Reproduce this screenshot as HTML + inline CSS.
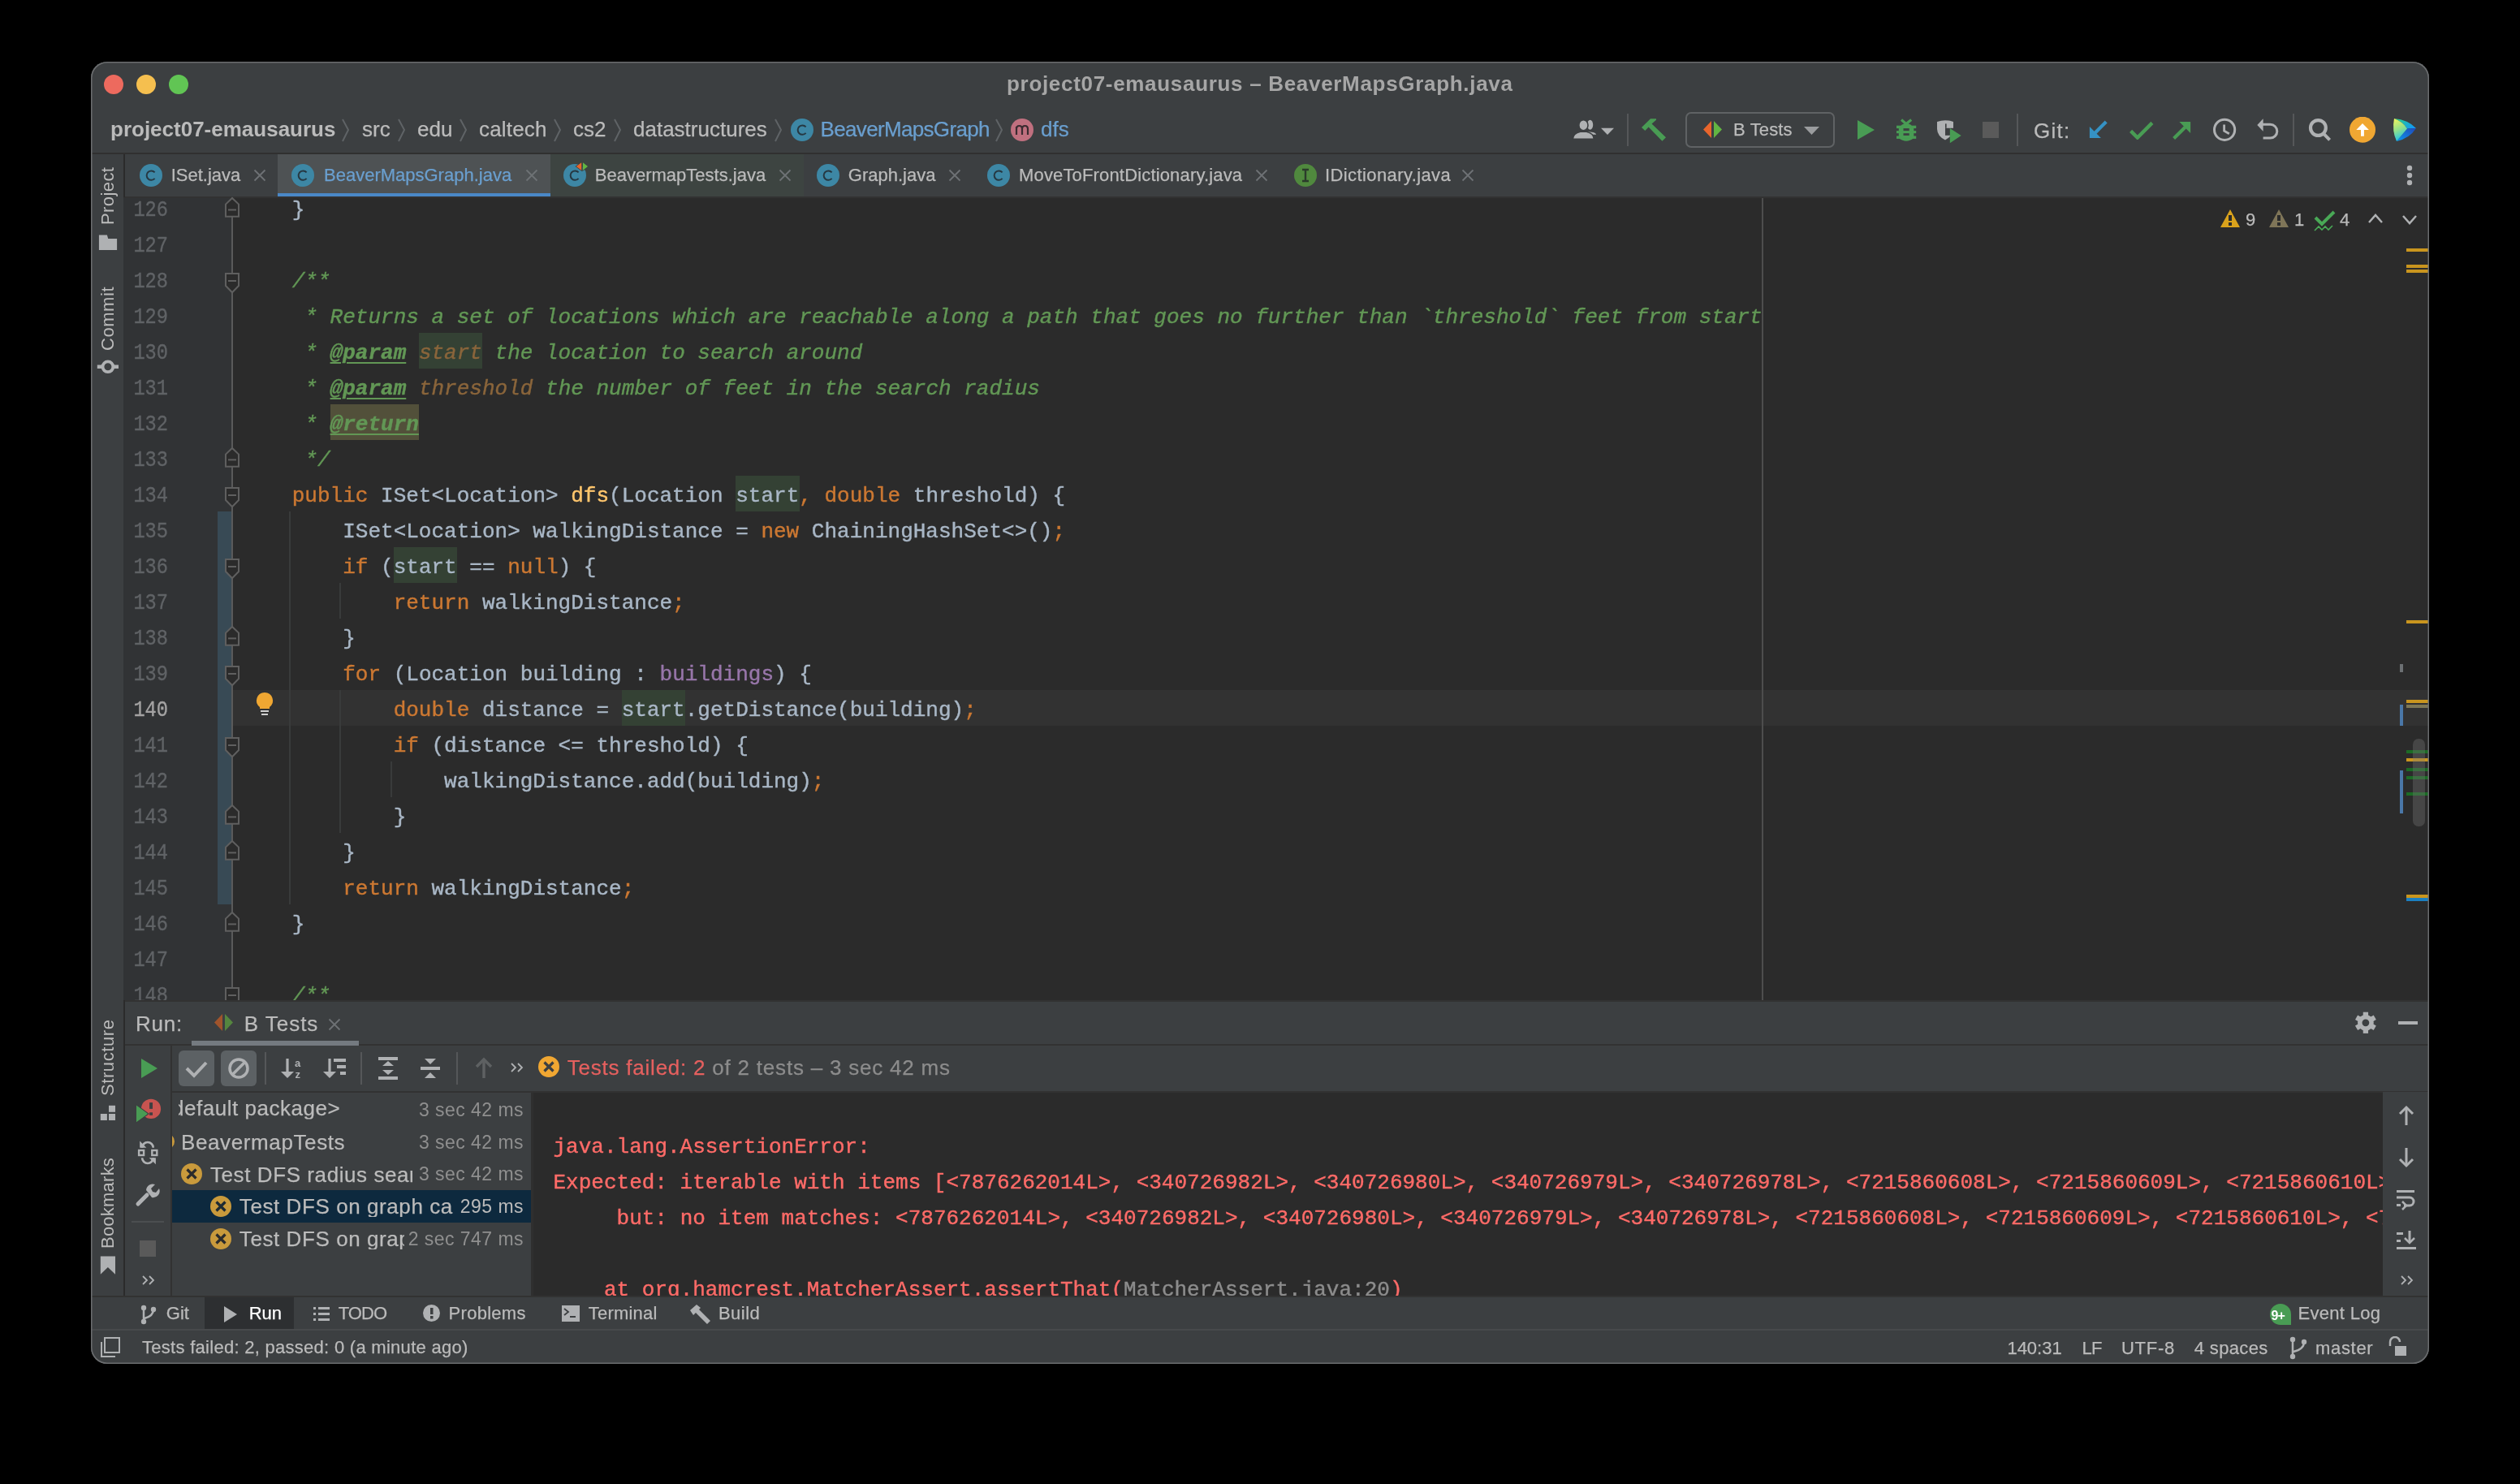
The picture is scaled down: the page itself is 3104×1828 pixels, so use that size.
<!DOCTYPE html>
<html><head><meta charset="utf-8"><style>
html,body{margin:0;padding:0;background:#000;width:3104px;height:1828px;overflow:hidden}
#win{will-change:transform;position:absolute;left:112px;top:76px;width:2880px;height:1604px;border-radius:20px;overflow:hidden;background:#3c3f41}
#frame{position:absolute;left:112px;top:76px;width:2880px;height:1604px;border-radius:20px;box-shadow:inset 0 0 0 1.5px #6b6d6f;pointer-events:none}
</style></head><body>
<div id="win"><div style="position:absolute;left:0px;top:0px;width:2880px;height:113px;background:#3c3f41;"></div><svg style="position:absolute;left:0px;top:0px;" width="140" height="60" viewBox="0 0 140 60"><circle cx="28" cy="28" r="12" fill="#ed6a5e"/><circle cx="68" cy="28" r="12" fill="#f5bf4f"/><circle cx="108" cy="28" r="12" fill="#61c554"/></svg><div style="position:absolute;left:1128.00px;top:13.99px;font-family:'Liberation Sans', sans-serif;font-size:26px;line-height:26px;color:#a6a6a6;white-space:pre;font-weight:700;letter-spacing:0.69px;">project07-emausaurus – BeaverMapsGraph.java</div><div style="position:absolute;left:24.00px;top:69.99px;font-family:'Liberation Sans', sans-serif;font-size:26px;line-height:26px;color:#bbbbbb;white-space:pre;font-weight:700;">project07-emausaurus</div><svg style="position:absolute;left:308px;top:70px;" width="12" height="30" viewBox="0 0 12 30"><polyline points="2,1 9,14 2,28" fill="none" stroke="#5f6366" stroke-width="2"/></svg><svg style="position:absolute;left:377px;top:70px;" width="12" height="30" viewBox="0 0 12 30"><polyline points="2,1 9,14 2,28" fill="none" stroke="#5f6366" stroke-width="2"/></svg><svg style="position:absolute;left:453px;top:70px;" width="12" height="30" viewBox="0 0 12 30"><polyline points="2,1 9,14 2,28" fill="none" stroke="#5f6366" stroke-width="2"/></svg><svg style="position:absolute;left:569px;top:70px;" width="12" height="30" viewBox="0 0 12 30"><polyline points="2,1 9,14 2,28" fill="none" stroke="#5f6366" stroke-width="2"/></svg><svg style="position:absolute;left:643px;top:70px;" width="12" height="30" viewBox="0 0 12 30"><polyline points="2,1 9,14 2,28" fill="none" stroke="#5f6366" stroke-width="2"/></svg><svg style="position:absolute;left:841px;top:70px;" width="12" height="30" viewBox="0 0 12 30"><polyline points="2,1 9,14 2,28" fill="none" stroke="#5f6366" stroke-width="2"/></svg><svg style="position:absolute;left:1113px;top:70px;" width="12" height="30" viewBox="0 0 12 30"><polyline points="2,1 9,14 2,28" fill="none" stroke="#5f6366" stroke-width="2"/></svg><div style="position:absolute;left:334.00px;top:69.99px;font-family:'Liberation Sans', sans-serif;font-size:26px;line-height:26px;color:#bbbbbb;white-space:pre;-webkit-text-stroke:0.25px currentColor;">src</div><div style="position:absolute;left:402.00px;top:69.99px;font-family:'Liberation Sans', sans-serif;font-size:26px;line-height:26px;color:#bbbbbb;white-space:pre;-webkit-text-stroke:0.25px currentColor;">edu</div><div style="position:absolute;left:478.00px;top:69.99px;font-family:'Liberation Sans', sans-serif;font-size:26px;line-height:26px;color:#bbbbbb;white-space:pre;letter-spacing:0.18px;-webkit-text-stroke:0.25px currentColor;">caltech</div><div style="position:absolute;left:594.00px;top:69.99px;font-family:'Liberation Sans', sans-serif;font-size:26px;line-height:26px;color:#bbbbbb;white-space:pre;-webkit-text-stroke:0.25px currentColor;">cs2</div><div style="position:absolute;left:668.00px;top:69.99px;font-family:'Liberation Sans', sans-serif;font-size:26px;line-height:26px;color:#bbbbbb;white-space:pre;-webkit-text-stroke:0.25px currentColor;">datastructures</div><svg style="position:absolute;left:862px;top:70px;" width="28" height="28" viewBox="0 0 28 28"><circle cx="14" cy="14" r="14" fill="#3d87a5"/><path d="M18.6 10.3 A5.7 5.7 0 1 0 18.6 17.9" fill="none" stroke="#263842" stroke-width="2"/></svg><div style="position:absolute;left:898.60px;top:69.99px;font-family:'Liberation Sans', sans-serif;font-size:26px;line-height:26px;color:#6a9fcf;white-space:pre;letter-spacing:-0.67px;-webkit-text-stroke:0.25px currentColor;">BeaverMapsGraph</div><svg style="position:absolute;left:1133px;top:70px;" width="28" height="28" viewBox="0 0 28 28"><circle cx="14" cy="14" r="14" fill="#c0707f"/><path d="M7 20 V10 M7 13 Q7 9 10.5 9 Q14 9 14 13 V20 M14 13 Q14 9 17.5 9 Q21 9 21 13 V20" fill="none" stroke="#3b2b30" stroke-width="2.2"/></svg><div style="position:absolute;left:1170.00px;top:69.99px;font-family:'Liberation Sans', sans-serif;font-size:26px;line-height:26px;color:#6a9fcf;white-space:pre;-webkit-text-stroke:0.25px currentColor;">dfs</div><svg style="position:absolute;left:1822px;top:68px;" width="60" height="32" viewBox="0 0 60 32"><ellipse cx="24.6" cy="9.8" rx="3.6" ry="6" fill="#afb1b3"/><path d="M20 18 Q31 18.5 32 21.3 L32 21.8 L24 21.8 Z" fill="#afb1b3"/><g stroke="#3c3f41" stroke-width="1.6"><ellipse cx="16.4" cy="10.2" rx="5.6" ry="6.6" fill="#afb1b3"/><path d="M3.2 27.4 Q3.6 20.2 12.6 18.2 L20.2 18.2 Q29.2 20.2 29.4 27.4 Z" fill="#afb1b3"/></g><path d="M38 13.8 L54 13.8 L46 22 Z" fill="#afb1b3"/></svg><div style="position:absolute;left:1892px;top:64px;width:2px;height:40px;background:#555759;"></div><svg style="position:absolute;left:1908px;top:68px;" width="36" height="32" viewBox="0 0 36 32"><path d="M2 13 L13 2.2 L20 2.2 L20 3.8 L14.5 8.6 L32 25.2 L27.4 29.8 L10.6 12.6 L6.3 17 Z" fill="#499c54"/></svg><div style="position:absolute;left:1964px;top:62px;width:184px;height:44px;border:2px solid #5f6264;border-radius:7px;box-sizing:border-box"></div><svg style="position:absolute;left:1984px;top:72px;" width="30" height="24" viewBox="0 0 30 24"><path d="M12 1 L12 22 L2 11.5 Z" fill="#e8652c"/><path d="M15 1 L15 22 L25 11.5 Z" fill="#62b543"/></svg><div style="position:absolute;left:2023.00px;top:73.38px;font-family:'Liberation Sans', sans-serif;font-size:22px;line-height:22px;color:#bbbbbb;white-space:pre;letter-spacing:0.14px;-webkit-text-stroke:0.25px currentColor;">B Tests</div><svg style="position:absolute;left:2108px;top:78px;" width="24" height="14" viewBox="0 0 24 14"><path d="M2 2 L21 2 L11.5 12 Z" fill="#9a9c9e"/></svg><svg style="position:absolute;left:2174px;top:70px;" width="26" height="28" viewBox="0 0 26 28"><path d="M2 2 L23 14 L2 26 Z" fill="#499c54"/></svg><svg style="position:absolute;left:2222px;top:68px;" width="30" height="34" viewBox="0 0 30 34"><path d="M8 3.5 L14 8.6 L20.2 3.5" fill="none" stroke="#499c54" stroke-width="3.2"/><path d="M9 9.5 Q14 5.8 19.2 9.5 L23.3 13 V26 Q14 33.5 4.8 26 V13 Z" fill="#499c54"/><rect x="2" y="10.7" width="24.2" height="3.4" fill="#499c54"/><rect x="2" y="17.1" width="24.2" height="3.1" fill="#499c54"/><rect x="2" y="23.5" width="24.2" height="3.4" fill="#499c54"/><rect x="10.5" y="14.1" width="7.2" height="3" fill="#3c3f41"/><rect x="10.5" y="20.2" width="7.2" height="2.7" fill="#3c3f41"/></svg><svg style="position:absolute;left:2271px;top:68px;" width="36" height="34" viewBox="0 0 36 34"><path d="M3 6 Q13 2.5 23 6 V14 Q22 24 13 28.4 Q3.5 24 3 15 Z" fill="#afb1b3"/><rect x="13" y="13.8" width="11" height="9" fill="#3c3f41"/><rect x="13" y="8.4" width="1.6" height="5.4" fill="#3c3f41"/><path d="M18.8 14 L32.7 23.1 L18.8 32.2 Z" fill="#499c54"/></svg><div style="position:absolute;left:2330px;top:74px;width:20px;height:20px;background:#5a5a5a;"></div><div style="position:absolute;left:2372px;top:64px;width:2px;height:40px;background:#555759;"></div><div style="position:absolute;left:2393.00px;top:71.99px;font-family:'Liberation Sans', sans-serif;font-size:26px;line-height:26px;color:#bbbbbb;white-space:pre;letter-spacing:1.26px;-webkit-text-stroke:0.25px currentColor;">Git:</div><svg style="position:absolute;left:2460px;top:70px;" width="26" height="26" viewBox="0 0 26 26"><path d="M22.2 4 L7.5 18.7" stroke="#3592c4" stroke-width="4.2"/><path d="M1.9 10 L1.9 24.1 L15.9 24.1 Z" fill="#3592c4"/></svg><svg style="position:absolute;left:2510px;top:70px;" width="32" height="26" viewBox="0 0 32 26"><path d="M2.6 15.4 L10.8 23.6 L28.9 5.4" fill="none" stroke="#499c54" stroke-width="4.4"/></svg><svg style="position:absolute;left:2562px;top:70px;" width="26" height="28" viewBox="0 0 26 28"><path d="M3.6 24.6 L17.5 10.7" stroke="#499c54" stroke-width="4.2"/><path d="M10.4 4 L24.1 4 L24.1 18 Z" fill="#499c54"/></svg><svg style="position:absolute;left:2612px;top:68px;" width="32" height="32" viewBox="0 0 32 32"><circle cx="16.1" cy="15.8" r="12.6" fill="none" stroke="#afb1b3" stroke-width="3"/><path d="M15.6 9.4 V17.2 L21.8 20.8" fill="none" stroke="#afb1b3" stroke-width="2.8"/></svg><svg style="position:absolute;left:2666px;top:68px;" width="32" height="32" viewBox="0 0 32 32"><path d="M9 9.3 H18.4 A8.4 8.4 0 0 1 18.4 26.1 H9.6" fill="none" stroke="#afb1b3" stroke-width="3"/><path d="M2.3 9.9 L9.6 2.2 L9.6 17.7 Z" fill="#afb1b3"/></svg><div style="position:absolute;left:2712px;top:64px;width:2px;height:40px;background:#555759;"></div><svg style="position:absolute;left:2730px;top:68px;" width="32" height="32" viewBox="0 0 32 32"><circle cx="13.4" cy="13.5" r="9.4" fill="none" stroke="#afb1b3" stroke-width="4.2"/><path d="M20.3 20.8 L27.6 28.3" stroke="#afb1b3" stroke-width="4"/></svg><svg style="position:absolute;left:2782px;top:68px;" width="32" height="32" viewBox="0 0 32 32"><circle cx="16" cy="15.7" r="16" fill="#f0a732"/><path d="M16 8 L23.9 16 H17.9 V23.8 H14 V16 H8.3 Z" fill="#ffffff"/></svg><svg style="position:absolute;left:2834px;top:68px;" width="32" height="32" viewBox="0 0 32 32"><defs><linearGradient id="lgL" x1="0" y1="0" x2="0.3" y2="1"><stop offset="0" stop-color="#f6f65a"/><stop offset="0.55" stop-color="#8fe08c"/><stop offset="1" stop-color="#1ec5ec"/></linearGradient><linearGradient id="lgT" x1="0" y1="0" x2="1" y2="0.6"><stop offset="0" stop-color="#2ad87f"/><stop offset="1" stop-color="#139bf0"/></linearGradient><linearGradient id="lgB" x1="1" y1="0" x2="0" y2="1"><stop offset="0" stop-color="#2347b8"/><stop offset="1" stop-color="#0a9af0"/></linearGradient></defs><path d="M3 2 Q20 3.5 30 14 L19 14.4 Q14 6 3 2 Z" fill="url(#lgT)"/><path d="M19 14.4 L30 14 Q22 26.5 6 30 Z" fill="url(#lgB)"/><path d="M3 2 Q0 17 6 30 L19 14.4 Q14 6 3 2 Z" fill="url(#lgL)"/></svg><div style="position:absolute;left:0px;top:112px;width:2880px;height:2px;background:#303030;"></div><div style="position:absolute;left:0px;top:114px;width:40px;height:1406px;background:#3c3f41;"></div><div style="position:absolute;left:40px;top:114px;width:2px;height:53px;background:#2b2b2b;"></div><div style="position:absolute;left:40px;top:1156px;width:2px;height:364px;background:#2b2b2b;"></div><div style="position:absolute;left:9.58px;top:201.00px;width:0;height:0"><div style="position:absolute;left:0;top:0;transform:rotate(-90deg);transform-origin:0 0;font-family:'Liberation Sans', sans-serif;font-size:22px;line-height:22px;color:#bbbbbb;white-space:pre;letter-spacing:0.41px">Project</div></div><svg style="position:absolute;left:8px;top:212px;" width="26" height="22" viewBox="0 0 26 22"><path d="M1.9 1.6 H11.9 L13.2 6.1 H24.1 V19.9 H1.9 Z" fill="#afb1b3"/></svg><div style="position:absolute;left:9.58px;top:355.80px;width:0;height:0"><div style="position:absolute;left:0;top:0;transform:rotate(-90deg);transform-origin:0 0;font-family:'Liberation Sans', sans-serif;font-size:22px;line-height:22px;color:#bbbbbb;white-space:pre;letter-spacing:0.55px">Commit</div></div><svg style="position:absolute;left:6px;top:367px;" width="30" height="18" viewBox="0 0 30 18"><circle cx="14.9" cy="8.8" r="6.4" fill="none" stroke="#afb1b3" stroke-width="3.8"/><rect x="1.8" y="6.5" width="6.8" height="4.5" fill="#afb1b3"/><rect x="21.2" y="6.5" width="6.8" height="4.5" fill="#afb1b3"/></svg><div style="position:absolute;left:10.38px;top:1273.70px;width:0;height:0"><div style="position:absolute;left:0;top:0;transform:rotate(-90deg);transform-origin:0 0;font-family:'Liberation Sans', sans-serif;font-size:22px;line-height:22px;color:#bbbbbb;white-space:pre;letter-spacing:0.58px">Structure</div></div><svg style="position:absolute;left:10px;top:1284px;" width="22" height="22" viewBox="0 0 22 22"><rect x="12" y="1.8" width="8" height="8" fill="#afb1b3"/><rect x="1.8" y="12" width="8.1" height="8" fill="#afb1b3"/><rect x="12" y="12" width="8" height="8" fill="#afb1b3"/></svg><div style="position:absolute;left:10.38px;top:1461.90px;width:0;height:0"><div style="position:absolute;left:0;top:0;transform:rotate(-90deg);transform-origin:0 0;font-family:'Liberation Sans', sans-serif;font-size:22px;line-height:22px;color:#bbbbbb;white-space:pre;letter-spacing:0.23px">Bookmarks</div></div><svg style="position:absolute;left:10px;top:1470px;" width="22" height="26" viewBox="0 0 22 26"><path d="M1.8 1.6 H20 V23.7 L10.9 14.9 L1.8 23.7 Z" fill="#afb1b3"/></svg><div style="position:absolute;left:42px;top:114px;width:2838px;height:52px;background:#3c3f41;"></div><div style="position:absolute;left:230px;top:114px;width:336px;height:52px;background:#4e5254;"></div><div style="position:absolute;left:230px;top:162px;width:336px;height:4px;background:#4a88c7;"></div><div style="position:absolute;left:566px;top:114px;width:312px;height:52px;background:#3d4441;"></div><div style="position:absolute;left:42px;top:166px;width:2838px;height:1px;background:#323232;"></div><svg style="position:absolute;left:60px;top:126px;" width="28" height="28" viewBox="0 0 28 28"><circle cx="14" cy="14" r="14" fill="#3d87a5"/><path d="M18.6 10.3 A5.7 5.7 0 1 0 18.6 17.9" fill="none" stroke="#263842" stroke-width="2"/></svg><div style="position:absolute;left:98.70px;top:129.38px;font-family:'Liberation Sans', sans-serif;font-size:22px;line-height:22px;color:#bbbbbb;white-space:pre;-webkit-text-stroke:0.25px currentColor;">ISet.java</div><svg style="position:absolute;left:200px;top:132px;" width="16" height="16" viewBox="0 0 16 16"><path d="M1.5 1.5 L14.5 14.5 M14.5 1.5 L1.5 14.5" stroke="#6e7275" stroke-width="1.8"/></svg><svg style="position:absolute;left:247px;top:126px;" width="28" height="28" viewBox="0 0 28 28"><circle cx="14" cy="14" r="14" fill="#3d87a5"/><path d="M18.6 10.3 A5.7 5.7 0 1 0 18.6 17.9" fill="none" stroke="#263842" stroke-width="2"/></svg><div style="position:absolute;left:287.00px;top:129.38px;font-family:'Liberation Sans', sans-serif;font-size:22px;line-height:22px;color:#6a9fcf;white-space:pre;-webkit-text-stroke:0.25px currentColor;">BeaverMapsGraph.java</div><svg style="position:absolute;left:534.5px;top:132px;" width="16" height="16" viewBox="0 0 16 16"><path d="M1.5 1.5 L14.5 14.5 M14.5 1.5 L1.5 14.5" stroke="#6e7275" stroke-width="1.8"/></svg><svg style="position:absolute;left:582px;top:126px;" width="28" height="28" viewBox="0 0 28 28"><circle cx="14" cy="14" r="14" fill="#3d87a5"/><path d="M18.6 10.3 A5.7 5.7 0 1 0 18.6 17.9" fill="none" stroke="#263842" stroke-width="2"/></svg><div style="position:absolute;left:620.80px;top:129.38px;font-family:'Liberation Sans', sans-serif;font-size:22px;line-height:22px;color:#bbbbbb;white-space:pre;-webkit-text-stroke:0.25px currentColor;">BeavermapTests.java</div><svg style="position:absolute;left:846.5px;top:132px;" width="16" height="16" viewBox="0 0 16 16"><path d="M1.5 1.5 L14.5 14.5 M14.5 1.5 L1.5 14.5" stroke="#6e7275" stroke-width="1.8"/></svg><svg style="position:absolute;left:894px;top:126px;" width="28" height="28" viewBox="0 0 28 28"><circle cx="14" cy="14" r="14" fill="#3d87a5"/><path d="M18.6 10.3 A5.7 5.7 0 1 0 18.6 17.9" fill="none" stroke="#263842" stroke-width="2"/></svg><div style="position:absolute;left:932.80px;top:129.38px;font-family:'Liberation Sans', sans-serif;font-size:22px;line-height:22px;color:#bbbbbb;white-space:pre;-webkit-text-stroke:0.25px currentColor;">Graph.java</div><svg style="position:absolute;left:1055.8px;top:132px;" width="16" height="16" viewBox="0 0 16 16"><path d="M1.5 1.5 L14.5 14.5 M14.5 1.5 L1.5 14.5" stroke="#6e7275" stroke-width="1.8"/></svg><svg style="position:absolute;left:1103.5px;top:126px;" width="28" height="28" viewBox="0 0 28 28"><circle cx="14" cy="14" r="14" fill="#3d87a5"/><path d="M18.6 10.3 A5.7 5.7 0 1 0 18.6 17.9" fill="none" stroke="#263842" stroke-width="2"/></svg><div style="position:absolute;left:1143.00px;top:129.38px;font-family:'Liberation Sans', sans-serif;font-size:22px;line-height:22px;color:#bbbbbb;white-space:pre;letter-spacing:0.16px;-webkit-text-stroke:0.25px currentColor;">MoveToFrontDictionary.java</div><svg style="position:absolute;left:1433.8px;top:132px;" width="16" height="16" viewBox="0 0 16 16"><path d="M1.5 1.5 L14.5 14.5 M14.5 1.5 L1.5 14.5" stroke="#6e7275" stroke-width="1.8"/></svg><svg style="position:absolute;left:1482px;top:126px;" width="28" height="28" viewBox="0 0 28 28"><circle cx="14" cy="14" r="14" fill="#50893e"/><path d="M10 7 H18 M14 7 V21 M10 21 H18" fill="none" stroke="#2b3b2b" stroke-width="2.4"/></svg><div style="position:absolute;left:1520.00px;top:129.38px;font-family:'Liberation Sans', sans-serif;font-size:22px;line-height:22px;color:#bbbbbb;white-space:pre;letter-spacing:0.4px;-webkit-text-stroke:0.25px currentColor;">IDictionary.java</div><svg style="position:absolute;left:1688.4px;top:132px;" width="16" height="16" viewBox="0 0 16 16"><path d="M1.5 1.5 L14.5 14.5 M14.5 1.5 L1.5 14.5" stroke="#6e7275" stroke-width="1.8"/></svg><svg style="position:absolute;left:595px;top:122px;" width="20" height="14" viewBox="0 0 20 14"><path d="M9.2 2.3 V11.8 L2.8 7 Z" fill="#e8652c" stroke="#3d4441" stroke-width="1.5" paint-order="stroke"/><path d="M11 2.3 V11.8 L17 7 Z" fill="#62b543" stroke="#3d4441" stroke-width="1.5" paint-order="stroke"/></svg><svg style="position:absolute;left:2850px;top:124px;" width="12" height="32" viewBox="0 0 12 32"><circle cx="6" cy="7" r="3.2" fill="#afb1b3"/><circle cx="6" cy="16" r="3.2" fill="#afb1b3"/><circle cx="6" cy="25" r="3.2" fill="#afb1b3"/></svg><div style="position:absolute;left:42px;top:167px;width:2838px;height:989px;background:#2b2b2b;"></div><div style="position:absolute;left:40px;top:167px;width:134px;height:989px;background:#313335;"></div><div style="position:absolute;left:174px;top:774px;width:2706px;height:44px;background:#323232;"></div><div style="position:absolute;left:2058px;top:167px;width:2px;height:989px;background:#4d4d4d;"></div><div style="position:absolute;left:40px;top:167px;width:2840px;height:1px;background:#323232;"></div><div style="position:absolute;left:185.30px;top:170.35px;font-family:'Liberation Mono', monospace;font-size:26.03px;line-height:26.03px;color:#a9b7c6;white-space:pre;-webkit-text-stroke:0.4px currentColor;"><span style="color:#a9b7c6">    }</span></div><div style="position:absolute;left:185.30px;top:258.35px;font-family:'Liberation Mono', monospace;font-size:26.03px;line-height:26.03px;color:#a9b7c6;white-space:pre;-webkit-text-stroke:0.4px currentColor;"><span style="color:#629755;font-style:italic">    /**</span></div><div style="position:absolute;left:185.30px;top:302.35px;font-family:'Liberation Mono', monospace;font-size:26.03px;line-height:26.03px;color:#a9b7c6;white-space:pre;-webkit-text-stroke:0.4px currentColor;"><span style="color:#629755;font-style:italic">     * Returns a set of locations which are reachable along a path that goes no further than `threshold` feet from start</span></div><div style="position:absolute;left:403.98px;top:334px;width:78.1px;height:44px;background:#344134;"></div><div style="position:absolute;left:185.30px;top:346.35px;font-family:'Liberation Mono', monospace;font-size:26.03px;line-height:26.03px;color:#a9b7c6;white-space:pre;-webkit-text-stroke:0.4px currentColor;"><span style="color:#629755;font-style:italic">     * </span><span style="color:#629755;font-style:italic;font-weight:700;text-decoration:underline;text-underline-offset:4px;text-decoration-thickness:2px">@param</span><span style="color:#629755;font-style:italic"> </span><span style="color:#8a653b;font-style:italic">start</span><span style="color:#629755;font-style:italic"> the location to search around</span></div><div style="position:absolute;left:185.30px;top:390.35px;font-family:'Liberation Mono', monospace;font-size:26.03px;line-height:26.03px;color:#a9b7c6;white-space:pre;-webkit-text-stroke:0.4px currentColor;"><span style="color:#629755;font-style:italic">     * </span><span style="color:#629755;font-style:italic;font-weight:700;text-decoration:underline;text-underline-offset:4px;text-decoration-thickness:2px">@param</span><span style="color:#629755;font-style:italic"> </span><span style="color:#8a653b;font-style:italic">threshold</span><span style="color:#629755;font-style:italic"> the number of feet in the search radius</span></div><div style="position:absolute;left:294.64px;top:422px;width:109.33999999999999px;height:44px;background:#52503a;"></div><div style="position:absolute;left:185.30px;top:434.35px;font-family:'Liberation Mono', monospace;font-size:26.03px;line-height:26.03px;color:#a9b7c6;white-space:pre;-webkit-text-stroke:0.4px currentColor;"><span style="color:#629755;font-style:italic">     * </span><span style="color:#629755;font-style:italic;font-weight:700;text-decoration:underline;text-underline-offset:4px;text-decoration-thickness:2px">@return</span></div><div style="position:absolute;left:185.30px;top:478.35px;font-family:'Liberation Mono', monospace;font-size:26.03px;line-height:26.03px;color:#a9b7c6;white-space:pre;-webkit-text-stroke:0.4px currentColor;"><span style="color:#629755;font-style:italic">     */</span></div><div style="position:absolute;left:794.48px;top:510px;width:78.1px;height:44px;background:#344134;"></div><div style="position:absolute;left:185.30px;top:522.35px;font-family:'Liberation Mono', monospace;font-size:26.03px;line-height:26.03px;color:#a9b7c6;white-space:pre;-webkit-text-stroke:0.4px currentColor;"><span style="color:#a9b7c6">    </span><span style="color:#cc7832">public</span><span style="color:#a9b7c6"> ISet&lt;Location&gt; </span><span style="color:#ffc66d">dfs</span><span style="color:#a9b7c6">(Location start</span><span style="color:#cc7832">,</span><span style="color:#a9b7c6"> </span><span style="color:#cc7832">double</span><span style="color:#a9b7c6"> threshold) {</span></div><div style="position:absolute;left:185.30px;top:566.35px;font-family:'Liberation Mono', monospace;font-size:26.03px;line-height:26.03px;color:#a9b7c6;white-space:pre;-webkit-text-stroke:0.4px currentColor;"><span style="color:#a9b7c6">        ISet&lt;Location&gt; walkingDistance = </span><span style="color:#cc7832">new</span><span style="color:#a9b7c6"> ChainingHashSet&lt;&gt;()</span><span style="color:#cc7832">;</span></div><div style="position:absolute;left:372.74px;top:598px;width:78.1px;height:44px;background:#344134;"></div><div style="position:absolute;left:185.30px;top:610.35px;font-family:'Liberation Mono', monospace;font-size:26.03px;line-height:26.03px;color:#a9b7c6;white-space:pre;-webkit-text-stroke:0.4px currentColor;"><span style="color:#a9b7c6">        </span><span style="color:#cc7832">if</span><span style="color:#a9b7c6"> (start == </span><span style="color:#cc7832">null</span><span style="color:#a9b7c6">) {</span></div><div style="position:absolute;left:185.30px;top:654.35px;font-family:'Liberation Mono', monospace;font-size:26.03px;line-height:26.03px;color:#a9b7c6;white-space:pre;-webkit-text-stroke:0.4px currentColor;"><span style="color:#a9b7c6">            </span><span style="color:#cc7832">return</span><span style="color:#a9b7c6"> walkingDistance</span><span style="color:#cc7832">;</span></div><div style="position:absolute;left:185.30px;top:698.35px;font-family:'Liberation Mono', monospace;font-size:26.03px;line-height:26.03px;color:#a9b7c6;white-space:pre;-webkit-text-stroke:0.4px currentColor;"><span style="color:#a9b7c6">        }</span></div><div style="position:absolute;left:185.30px;top:742.35px;font-family:'Liberation Mono', monospace;font-size:26.03px;line-height:26.03px;color:#a9b7c6;white-space:pre;-webkit-text-stroke:0.4px currentColor;"><span style="color:#a9b7c6">        </span><span style="color:#cc7832">for</span><span style="color:#a9b7c6"> (Location building : </span><span style="color:#9876aa">buildings</span><span style="color:#a9b7c6">) {</span></div><div style="position:absolute;left:653.9px;top:774px;width:78.1px;height:44px;background:#344134;"></div><div style="position:absolute;left:185.30px;top:786.35px;font-family:'Liberation Mono', monospace;font-size:26.03px;line-height:26.03px;color:#a9b7c6;white-space:pre;-webkit-text-stroke:0.4px currentColor;"><span style="color:#a9b7c6">            </span><span style="color:#cc7832">double</span><span style="color:#a9b7c6"> distance = start.getDistance(building)</span><span style="color:#cc7832">;</span></div><div style="position:absolute;left:185.30px;top:830.35px;font-family:'Liberation Mono', monospace;font-size:26.03px;line-height:26.03px;color:#a9b7c6;white-space:pre;-webkit-text-stroke:0.4px currentColor;"><span style="color:#a9b7c6">            </span><span style="color:#cc7832">if</span><span style="color:#a9b7c6"> (distance &lt;= threshold) {</span></div><div style="position:absolute;left:185.30px;top:874.35px;font-family:'Liberation Mono', monospace;font-size:26.03px;line-height:26.03px;color:#a9b7c6;white-space:pre;-webkit-text-stroke:0.4px currentColor;"><span style="color:#a9b7c6">                walkingDistance.add(building)</span><span style="color:#cc7832">;</span></div><div style="position:absolute;left:185.30px;top:918.35px;font-family:'Liberation Mono', monospace;font-size:26.03px;line-height:26.03px;color:#a9b7c6;white-space:pre;-webkit-text-stroke:0.4px currentColor;"><span style="color:#a9b7c6">            }</span></div><div style="position:absolute;left:185.30px;top:962.35px;font-family:'Liberation Mono', monospace;font-size:26.03px;line-height:26.03px;color:#a9b7c6;white-space:pre;-webkit-text-stroke:0.4px currentColor;"><span style="color:#a9b7c6">        }</span></div><div style="position:absolute;left:185.30px;top:1006.35px;font-family:'Liberation Mono', monospace;font-size:26.03px;line-height:26.03px;color:#a9b7c6;white-space:pre;-webkit-text-stroke:0.4px currentColor;"><span style="color:#a9b7c6">        </span><span style="color:#cc7832">return</span><span style="color:#a9b7c6"> walkingDistance</span><span style="color:#cc7832">;</span></div><div style="position:absolute;left:185.30px;top:1050.35px;font-family:'Liberation Mono', monospace;font-size:26.03px;line-height:26.03px;color:#a9b7c6;white-space:pre;-webkit-text-stroke:0.4px currentColor;"><span style="color:#a9b7c6">    }</span></div><div style="position:absolute;left:185.30px;top:1138.35px;font-family:'Liberation Mono', monospace;font-size:26.03px;line-height:26.03px;color:#a9b7c6;white-space:pre;-webkit-text-stroke:0.4px currentColor;"><span style="color:#629755;font-style:italic">    /**</span></div><div style="position:absolute;left:35px;top:169.22px;width:60px;text-align:right;font-family:'Liberation Mono', monospace;font-size:27.5px;line-height:27.5px;transform:scaleX(0.86);transform-origin:100% 50%;-webkit-text-stroke:0.35px currentColor;color:#606366">126</div><div style="position:absolute;left:35px;top:213.22px;width:60px;text-align:right;font-family:'Liberation Mono', monospace;font-size:27.5px;line-height:27.5px;transform:scaleX(0.86);transform-origin:100% 50%;-webkit-text-stroke:0.35px currentColor;color:#606366">127</div><div style="position:absolute;left:35px;top:257.22px;width:60px;text-align:right;font-family:'Liberation Mono', monospace;font-size:27.5px;line-height:27.5px;transform:scaleX(0.86);transform-origin:100% 50%;-webkit-text-stroke:0.35px currentColor;color:#606366">128</div><div style="position:absolute;left:35px;top:301.22px;width:60px;text-align:right;font-family:'Liberation Mono', monospace;font-size:27.5px;line-height:27.5px;transform:scaleX(0.86);transform-origin:100% 50%;-webkit-text-stroke:0.35px currentColor;color:#606366">129</div><div style="position:absolute;left:35px;top:345.22px;width:60px;text-align:right;font-family:'Liberation Mono', monospace;font-size:27.5px;line-height:27.5px;transform:scaleX(0.86);transform-origin:100% 50%;-webkit-text-stroke:0.35px currentColor;color:#606366">130</div><div style="position:absolute;left:35px;top:389.22px;width:60px;text-align:right;font-family:'Liberation Mono', monospace;font-size:27.5px;line-height:27.5px;transform:scaleX(0.86);transform-origin:100% 50%;-webkit-text-stroke:0.35px currentColor;color:#606366">131</div><div style="position:absolute;left:35px;top:433.22px;width:60px;text-align:right;font-family:'Liberation Mono', monospace;font-size:27.5px;line-height:27.5px;transform:scaleX(0.86);transform-origin:100% 50%;-webkit-text-stroke:0.35px currentColor;color:#606366">132</div><div style="position:absolute;left:35px;top:477.22px;width:60px;text-align:right;font-family:'Liberation Mono', monospace;font-size:27.5px;line-height:27.5px;transform:scaleX(0.86);transform-origin:100% 50%;-webkit-text-stroke:0.35px currentColor;color:#606366">133</div><div style="position:absolute;left:35px;top:521.22px;width:60px;text-align:right;font-family:'Liberation Mono', monospace;font-size:27.5px;line-height:27.5px;transform:scaleX(0.86);transform-origin:100% 50%;-webkit-text-stroke:0.35px currentColor;color:#606366">134</div><div style="position:absolute;left:35px;top:565.22px;width:60px;text-align:right;font-family:'Liberation Mono', monospace;font-size:27.5px;line-height:27.5px;transform:scaleX(0.86);transform-origin:100% 50%;-webkit-text-stroke:0.35px currentColor;color:#606366">135</div><div style="position:absolute;left:35px;top:609.22px;width:60px;text-align:right;font-family:'Liberation Mono', monospace;font-size:27.5px;line-height:27.5px;transform:scaleX(0.86);transform-origin:100% 50%;-webkit-text-stroke:0.35px currentColor;color:#606366">136</div><div style="position:absolute;left:35px;top:653.22px;width:60px;text-align:right;font-family:'Liberation Mono', monospace;font-size:27.5px;line-height:27.5px;transform:scaleX(0.86);transform-origin:100% 50%;-webkit-text-stroke:0.35px currentColor;color:#606366">137</div><div style="position:absolute;left:35px;top:697.22px;width:60px;text-align:right;font-family:'Liberation Mono', monospace;font-size:27.5px;line-height:27.5px;transform:scaleX(0.86);transform-origin:100% 50%;-webkit-text-stroke:0.35px currentColor;color:#606366">138</div><div style="position:absolute;left:35px;top:741.22px;width:60px;text-align:right;font-family:'Liberation Mono', monospace;font-size:27.5px;line-height:27.5px;transform:scaleX(0.86);transform-origin:100% 50%;-webkit-text-stroke:0.35px currentColor;color:#606366">139</div><div style="position:absolute;left:35px;top:785.22px;width:60px;text-align:right;font-family:'Liberation Mono', monospace;font-size:27.5px;line-height:27.5px;transform:scaleX(0.86);transform-origin:100% 50%;-webkit-text-stroke:0.35px currentColor;color:#a4a3a3">140</div><div style="position:absolute;left:35px;top:829.22px;width:60px;text-align:right;font-family:'Liberation Mono', monospace;font-size:27.5px;line-height:27.5px;transform:scaleX(0.86);transform-origin:100% 50%;-webkit-text-stroke:0.35px currentColor;color:#606366">141</div><div style="position:absolute;left:35px;top:873.22px;width:60px;text-align:right;font-family:'Liberation Mono', monospace;font-size:27.5px;line-height:27.5px;transform:scaleX(0.86);transform-origin:100% 50%;-webkit-text-stroke:0.35px currentColor;color:#606366">142</div><div style="position:absolute;left:35px;top:917.22px;width:60px;text-align:right;font-family:'Liberation Mono', monospace;font-size:27.5px;line-height:27.5px;transform:scaleX(0.86);transform-origin:100% 50%;-webkit-text-stroke:0.35px currentColor;color:#606366">143</div><div style="position:absolute;left:35px;top:961.22px;width:60px;text-align:right;font-family:'Liberation Mono', monospace;font-size:27.5px;line-height:27.5px;transform:scaleX(0.86);transform-origin:100% 50%;-webkit-text-stroke:0.35px currentColor;color:#606366">144</div><div style="position:absolute;left:35px;top:1005.22px;width:60px;text-align:right;font-family:'Liberation Mono', monospace;font-size:27.5px;line-height:27.5px;transform:scaleX(0.86);transform-origin:100% 50%;-webkit-text-stroke:0.35px currentColor;color:#606366">145</div><div style="position:absolute;left:35px;top:1049.22px;width:60px;text-align:right;font-family:'Liberation Mono', monospace;font-size:27.5px;line-height:27.5px;transform:scaleX(0.86);transform-origin:100% 50%;-webkit-text-stroke:0.35px currentColor;color:#606366">146</div><div style="position:absolute;left:35px;top:1093.22px;width:60px;text-align:right;font-family:'Liberation Mono', monospace;font-size:27.5px;line-height:27.5px;transform:scaleX(0.86);transform-origin:100% 50%;-webkit-text-stroke:0.35px currentColor;color:#606366">147</div><div style="position:absolute;left:35px;top:1137.22px;width:60px;text-align:right;font-family:'Liberation Mono', monospace;font-size:27.5px;line-height:27.5px;transform:scaleX(0.86);transform-origin:100% 50%;-webkit-text-stroke:0.35px currentColor;color:#606366">148</div><div style="position:absolute;left:156px;top:554px;width:17px;height:484px;background:#384a55;"></div><div style="position:absolute;left:244px;top:554px;width:2px;height:484px;background:#393b3b;"></div><div style="position:absolute;left:306px;top:642px;width:2px;height:44px;background:#393b3b;"></div><div style="position:absolute;left:306px;top:774px;width:2px;height:176px;background:#393b3b;"></div><div style="position:absolute;left:368.5px;top:862px;width:2px;height:44px;background:#393b3b;"></div><div style="position:absolute;left:173px;top:167px;width:2px;height:989px;background:#5a5a5a;"></div><svg style="position:absolute;left:164px;top:259px;" width="20" height="28" viewBox="0 0 20 28"><path d="M2 2 H18 V17 L10 25.2 L2 17 Z" fill="#2b2b2b" stroke="#5f5f5f" stroke-width="2"/><path d="M5 11 H15" stroke="#5f5f5f" stroke-width="2"/></svg><svg style="position:absolute;left:164px;top:523px;" width="20" height="28" viewBox="0 0 20 28"><path d="M2 2 H18 V17 L10 25.2 L2 17 Z" fill="#2b2b2b" stroke="#5f5f5f" stroke-width="2"/><path d="M5 11 H15" stroke="#5f5f5f" stroke-width="2"/></svg><svg style="position:absolute;left:164px;top:611px;" width="20" height="28" viewBox="0 0 20 28"><path d="M2 2 H18 V17 L10 25.2 L2 17 Z" fill="#2b2b2b" stroke="#5f5f5f" stroke-width="2"/><path d="M5 11 H15" stroke="#5f5f5f" stroke-width="2"/></svg><svg style="position:absolute;left:164px;top:743px;" width="20" height="28" viewBox="0 0 20 28"><path d="M2 2 H18 V17 L10 25.2 L2 17 Z" fill="#2b2b2b" stroke="#5f5f5f" stroke-width="2"/><path d="M5 11 H15" stroke="#5f5f5f" stroke-width="2"/></svg><svg style="position:absolute;left:164px;top:831px;" width="20" height="28" viewBox="0 0 20 28"><path d="M2 2 H18 V17 L10 25.2 L2 17 Z" fill="#2b2b2b" stroke="#5f5f5f" stroke-width="2"/><path d="M5 11 H15" stroke="#5f5f5f" stroke-width="2"/></svg><svg style="position:absolute;left:164px;top:1139px;" width="20" height="28" viewBox="0 0 20 28"><path d="M2 2 H18 V17 L10 25.2 L2 17 Z" fill="#2b2b2b" stroke="#5f5f5f" stroke-width="2"/><path d="M5 11 H15" stroke="#5f5f5f" stroke-width="2"/></svg><svg style="position:absolute;left:164px;top:165.6px;" width="20" height="28" viewBox="0 0 20 28"><path d="M2 24.7 H18 V9.6 L10 2 L2 9.6 Z" fill="#2b2b2b" stroke="#5f5f5f" stroke-width="2"/><path d="M5 16.4 H15" stroke="#5f5f5f" stroke-width="2"/></svg><svg style="position:absolute;left:164px;top:473.6px;" width="20" height="28" viewBox="0 0 20 28"><path d="M2 24.7 H18 V9.6 L10 2 L2 9.6 Z" fill="#2b2b2b" stroke="#5f5f5f" stroke-width="2"/><path d="M5 16.4 H15" stroke="#5f5f5f" stroke-width="2"/></svg><svg style="position:absolute;left:164px;top:693.6px;" width="20" height="28" viewBox="0 0 20 28"><path d="M2 24.7 H18 V9.6 L10 2 L2 9.6 Z" fill="#2b2b2b" stroke="#5f5f5f" stroke-width="2"/><path d="M5 16.4 H15" stroke="#5f5f5f" stroke-width="2"/></svg><svg style="position:absolute;left:164px;top:913.6px;" width="20" height="28" viewBox="0 0 20 28"><path d="M2 24.7 H18 V9.6 L10 2 L2 9.6 Z" fill="#2b2b2b" stroke="#5f5f5f" stroke-width="2"/><path d="M5 16.4 H15" stroke="#5f5f5f" stroke-width="2"/></svg><svg style="position:absolute;left:164px;top:957.5999999999999px;" width="20" height="28" viewBox="0 0 20 28"><path d="M2 24.7 H18 V9.6 L10 2 L2 9.6 Z" fill="#2b2b2b" stroke="#5f5f5f" stroke-width="2"/><path d="M5 16.4 H15" stroke="#5f5f5f" stroke-width="2"/></svg><svg style="position:absolute;left:164px;top:1045.6px;" width="20" height="28" viewBox="0 0 20 28"><path d="M2 24.7 H18 V9.6 L10 2 L2 9.6 Z" fill="#2b2b2b" stroke="#5f5f5f" stroke-width="2"/><path d="M5 16.4 H15" stroke="#5f5f5f" stroke-width="2"/></svg><svg style="position:absolute;left:200px;top:774px;" width="28" height="34" viewBox="0 0 28 34"><path d="M14 3 A10 10 0 0 1 20 21 V23 H8 V21 A10 10 0 0 1 14 3 Z" fill="#f0a732"/><path d="M9 26 H19 M10 30 H18" stroke="#cfcfcf" stroke-width="2"/></svg><svg style="position:absolute;left:2622px;top:180px;" width="30" height="28" viewBox="0 0 30 28"><path d="M13 2 L25 24 H1 Z" fill="#d9a21c"/><rect x="11" y="9" width="4" height="7" fill="#2b2b2b"/><rect x="11" y="18" width="4" height="4" fill="#2b2b2b"/></svg><div style="position:absolute;left:2654.00px;top:184.38px;font-family:'Liberation Sans', sans-serif;font-size:22px;line-height:22px;color:#bbbbbb;white-space:pre;-webkit-text-stroke:0.25px currentColor;">9</div><svg style="position:absolute;left:2682px;top:180px;" width="30" height="28" viewBox="0 0 30 28"><path d="M13 2 L25 24 H1 Z" fill="#7f7558"/><rect x="11" y="9" width="4" height="7" fill="#2b2b2b"/><rect x="11" y="18" width="4" height="4" fill="#2b2b2b"/></svg><div style="position:absolute;left:2714.00px;top:184.38px;font-family:'Liberation Sans', sans-serif;font-size:22px;line-height:22px;color:#bbbbbb;white-space:pre;-webkit-text-stroke:0.25px currentColor;">1</div><svg style="position:absolute;left:2738px;top:182px;" width="28" height="28" viewBox="0 0 28 28"><path d="M2 10 L10 18 L25 3" fill="none" stroke="#49a856" stroke-width="4"/><path d="M1 26 L6 21 L10 25 L14 21 L18 25 L23 20" fill="none" stroke="#49a856" stroke-width="1.6"/></svg><div style="position:absolute;left:2770.00px;top:184.38px;font-family:'Liberation Sans', sans-serif;font-size:22px;line-height:22px;color:#bbbbbb;white-space:pre;-webkit-text-stroke:0.25px currentColor;">4</div><svg style="position:absolute;left:2804px;top:186px;" width="20" height="14" viewBox="0 0 20 14"><path d="M2 12 L10 3 L18 12" fill="none" stroke="#afb1b3" stroke-width="2.5"/></svg><svg style="position:absolute;left:2846px;top:188px;" width="20" height="14" viewBox="0 0 20 14"><path d="M2 2 L10 11 L18 2" fill="none" stroke="#afb1b3" stroke-width="2.5"/></svg><div style="position:absolute;left:2852px;top:230px;width:27px;height:4px;background:#c9951e;"></div><div style="position:absolute;left:2852px;top:250px;width:27px;height:4px;background:#c9951e;"></div><div style="position:absolute;left:2852px;top:256px;width:27px;height:4px;background:#c9951e;"></div><div style="position:absolute;left:2852px;top:688px;width:27px;height:4px;background:#c9951e;"></div><div style="position:absolute;left:2852px;top:786px;width:27px;height:4px;background:#c9951e;"></div><div style="position:absolute;left:2852px;top:792px;width:27px;height:4px;background:#7c7656;"></div><div style="position:absolute;left:2852px;top:848px;width:27px;height:4px;background:#1c6b25;"></div><div style="position:absolute;left:2852px;top:858px;width:27px;height:4px;background:#c9951e;"></div><div style="position:absolute;left:2852px;top:870px;width:27px;height:4px;background:#1c6b25;"></div><div style="position:absolute;left:2852px;top:880px;width:27px;height:4px;background:#1c6b25;"></div><div style="position:absolute;left:2852px;top:900px;width:27px;height:4px;background:#1c6b25;"></div><div style="position:absolute;left:2852px;top:1025.5px;width:27px;height:4px;background:#c9951e;"></div><div style="position:absolute;left:2852px;top:1030px;width:27px;height:4px;background:#1b7fc1;"></div><div style="position:absolute;left:2844px;top:742px;width:4px;height:10px;background:#6c7073;"></div><div style="position:absolute;left:2844px;top:792px;width:4px;height:26px;background:#4a77a8;"></div><div style="position:absolute;left:2844px;top:873px;width:4px;height:53px;background:#4a77a8;"></div><div style="position:absolute;left:2860px;top:834px;width:15px;height:108px;background:rgba(120,120,120,0.35);border-radius:7px;"></div><div style="position:absolute;left:42px;top:1156px;width:2838px;height:2px;background:#323232;"></div><div style="position:absolute;left:42px;top:1158px;width:2838px;height:52px;background:#3c3f41;"></div><div style="position:absolute;left:55.00px;top:1171.99px;font-family:'Liberation Sans', sans-serif;font-size:26px;line-height:26px;color:#bbbbbb;white-space:pre;letter-spacing:0.77px;-webkit-text-stroke:0.25px currentColor;">Run:</div><svg style="position:absolute;left:150px;top:1172px;" width="30" height="24" viewBox="0 0 30 24"><path d="M12 1 L12 22 L2 11.5 Z" fill="#a0542c"/><path d="M15 1 L15 22 L25 11.5 Z" fill="#55863f"/></svg><div style="position:absolute;left:188.80px;top:1171.99px;font-family:'Liberation Sans', sans-serif;font-size:26px;line-height:26px;color:#bbbbbb;white-space:pre;letter-spacing:0.96px;-webkit-text-stroke:0.25px currentColor;">B Tests</div><svg style="position:absolute;left:292px;top:1177.8px;" width="16" height="16" viewBox="0 0 16 16"><path d="M1.5 1.5 L14.5 14.5 M14.5 1.5 L1.5 14.5" stroke="#6e7275" stroke-width="1.8"/></svg><div style="position:absolute;left:42px;top:1210px;width:2838px;height:2px;background:#323232;"></div><div style="position:absolute;left:124px;top:1206px;width:206px;height:6px;background:#747a80;"></div><svg style="position:absolute;left:2786px;top:1168px;" width="32" height="32" viewBox="0 0 32 32"><g transform="translate(15.9 15.8)"><circle r="7.15" fill="none" stroke="#afb1b3" stroke-width="5.5"/><rect x="-3.15" y="-13.1" width="6.3" height="5" fill="#afb1b3" transform="rotate(0)"/><rect x="-3.15" y="-13.1" width="6.3" height="5" fill="#afb1b3" transform="rotate(60)"/><rect x="-3.15" y="-13.1" width="6.3" height="5" fill="#afb1b3" transform="rotate(120)"/><rect x="-3.15" y="-13.1" width="6.3" height="5" fill="#afb1b3" transform="rotate(180)"/><rect x="-3.15" y="-13.1" width="6.3" height="5" fill="#afb1b3" transform="rotate(240)"/><rect x="-3.15" y="-13.1" width="6.3" height="5" fill="#afb1b3" transform="rotate(300)"/></g></svg><div style="position:absolute;left:2842px;top:1182px;width:24px;height:4px;background:#afb1b3;"></div><div style="position:absolute;left:42px;top:1212px;width:56px;height:308px;background:#3c3f41;"></div><div style="position:absolute;left:98px;top:1212px;width:2px;height:308px;background:#323232;"></div><svg style="position:absolute;left:60px;top:1226px;" width="24" height="28" viewBox="0 0 24 28"><path d="M2 2 L22 14 L2 26 Z" fill="#499c54"/></svg><svg style="position:absolute;left:52px;top:1276px;" width="36" height="32" viewBox="0 0 36 32"><circle cx="22" cy="13.9" r="12.1" fill="#c75450"/><rect x="20.1" y="6.1" width="3.9" height="7.8" fill="#3c3f41"/><rect x="20.1" y="18.3" width="3.9" height="3.5" fill="#3c3f41"/><path d="M4 9.8 L4 29.9 L17.9 19.9 Z" fill="#499c54" stroke="#3c3f41" stroke-width="2.4" paint-order="stroke"/><path d="M4 9.8 L4 29.9 L17.9 19.9 Z" fill="#499c54"/></svg><svg style="position:absolute;left:52px;top:1326px;" width="34" height="36" viewBox="0 0 34 36"><path d="M11.1 11.8 A6.8 6.8 0 0 1 24.7 11.8" fill="none" stroke="#afb1b3" stroke-width="2.7"/><path d="M8.2 3.4 L8.2 11.8 L16.3 11.8 Z" fill="#afb1b3"/><rect x="7.1" y="15" width="6" height="6" fill="none" stroke="#afb1b3" stroke-width="2.4"/><rect x="23.3" y="15" width="6" height="6" fill="none" stroke="#afb1b3" stroke-width="2.4"/><path d="M11.1 24.2 A6.8 6.8 0 0 0 24.7 24.2" fill="none" stroke="#afb1b3" stroke-width="2.7"/><path d="M27.9 24.2 L27.9 32.2 L19.7 24.2 Z" fill="#afb1b3"/></svg><svg style="position:absolute;left:54px;top:1380px;" width="32" height="32" viewBox="0 0 32 32"><path d="M4 27 L15 16" stroke="#afb1b3" stroke-width="5" stroke-linecap="round"/><path d="M14 10 A8 8 0 0 1 25 3 L20 8 L22 12 L26 13 L30 8 A8 8 0 0 1 21 19 Z" fill="#afb1b3"/></svg><div style="position:absolute;left:50px;top:1428px;width:40px;height:2px;background:#4b4e50;"></div><div style="position:absolute;left:60px;top:1452px;width:20px;height:20px;background:#5a5a5a;"></div><svg style="position:absolute;left:62px;top:1494px;" width="18" height="14" viewBox="0 0 18 14"><path d="M2 2 L7 7 L2 12 M10 2 L15 7 L10 12" fill="none" stroke="#afb1b3" stroke-width="1.8"/></svg><div style="position:absolute;left:100px;top:1212px;width:2780px;height:56px;background:#3c3f41;"></div><div style="position:absolute;left:108px;top:1218px;width:44px;height:44px;background:#5c6164;border-radius:6px;"></div><svg style="position:absolute;left:108px;top:1218px;" width="44" height="44" viewBox="0 0 44 44"><path d="M10 22 L19 31 L34 15" fill="none" stroke="#afb1b3" stroke-width="4"/></svg><div style="position:absolute;left:160px;top:1218px;width:44px;height:44px;background:#5c6164;border-radius:6px;"></div><svg style="position:absolute;left:160px;top:1218px;" width="44" height="44" viewBox="0 0 44 44"><circle cx="22" cy="22" r="11" fill="none" stroke="#afb1b3" stroke-width="3.5"/><path d="M15 29 L29 15" stroke="#afb1b3" stroke-width="3.5"/></svg><div style="position:absolute;left:214px;top:1220px;width:2px;height:40px;background:#555759;"></div><svg style="position:absolute;left:232px;top:1226px;" width="32" height="30" viewBox="0 0 32 30"><path d="M10 2 V20" stroke="#afb1b3" stroke-width="3.2"/><path d="M2 18 L18 18 L10 26 Z" fill="#afb1b3"/><text x="19" y="12" font-family="Liberation Sans" font-weight="700" font-size="13" fill="#afb1b3">a</text><text x="19.5" y="26" font-family="Liberation Sans" font-weight="700" font-size="13" fill="#afb1b3">z</text></svg><svg style="position:absolute;left:284px;top:1226px;" width="34" height="30" viewBox="0 0 34 30"><path d="M10 2 V20" stroke="#afb1b3" stroke-width="3.2"/><path d="M2 18 L18 18 L10 26 Z" fill="#afb1b3"/><rect x="15" y="2" width="15" height="4" fill="#afb1b3"/><rect x="19" y="10" width="11" height="4" fill="#afb1b3"/><rect x="23" y="18" width="7" height="4" fill="#afb1b3"/></svg><div style="position:absolute;left:332px;top:1220px;width:2px;height:40px;background:#555759;"></div><svg style="position:absolute;left:352px;top:1224px;" width="28" height="32" viewBox="0 0 28 32"><rect x="2" y="2" width="24" height="4" fill="#afb1b3"/><path d="M7 13 L14 7 L21 13 Z M7 18 L21 18 L14 24 Z" fill="#afb1b3"/><rect x="2" y="26" width="24" height="4" fill="#afb1b3"/></svg><svg style="position:absolute;left:404px;top:1224px;" width="28" height="32" viewBox="0 0 28 32"><path d="M7 4 L21 4 L14 11 Z" fill="#afb1b3"/><rect x="2" y="14" width="24" height="4" fill="#afb1b3"/><path d="M7 28 L14 21 L21 28 Z" fill="#afb1b3"/></svg><div style="position:absolute;left:450px;top:1220px;width:2px;height:40px;background:#555759;"></div><svg style="position:absolute;left:472px;top:1226px;" width="24" height="28" viewBox="0 0 24 28"><path d="M12 4 V26" stroke="#5e6162" stroke-width="3.5"/><path d="M3 12 L12 3 L21 12" fill="none" stroke="#5e6162" stroke-width="3.5"/></svg><svg style="position:absolute;left:516px;top:1232px;" width="18" height="14" viewBox="0 0 18 14"><path d="M2 2 L7 7 L2 12 M10 2 L15 7 L10 12" fill="none" stroke="#afb1b3" stroke-width="1.8"/></svg><svg style="position:absolute;left:551px;top:1225px;" width="26" height="26" viewBox="0 0 26 26"><circle cx="13" cy="13" r="13" fill="#f0a732"/><path d="M7.5 7.5 L18.5 18.5 M18.5 7.5 L7.5 18.5" stroke="#3c3f41" stroke-width="3.2"/></svg><div style="position:absolute;left:586.70px;top:1225.69px;font-family:'Liberation Sans', sans-serif;font-size:26px;line-height:26px;color:#8c8c8c;white-space:pre;letter-spacing:0.78px;-webkit-text-stroke:0.25px currentColor;"><span style="color:#e5605f">Tests failed: 2</span> of 2 tests – 3 sec 42 ms</div><div style="position:absolute;left:100px;top:1269px;width:442px;height:251px;background:#3c3f41;"></div><div style="position:absolute;left:100px;top:1390px;width:442px;height:40px;background:#0d293e;"></div><div style="position:absolute;left:100.00px;top:1276.49px;font-family:'Liberation Sans', sans-serif;font-size:26px;line-height:26px;color:#bbbbbb;white-space:pre;letter-spacing:0.53px;-webkit-text-stroke:0.25px currentColor;clip-path:inset(0 0 0 8px);">default package&gt;</div><div style="position:absolute;left:111.00px;top:1317.99px;font-family:'Liberation Sans', sans-serif;font-size:26px;line-height:26px;color:#bbbbbb;white-space:pre;letter-spacing:0.61px;-webkit-text-stroke:0.25px currentColor;">BeavermapTests</div><svg style="position:absolute;left:100px;top:1320px;" width="6" height="20" viewBox="0 0 6 20"><circle cx="-7" cy="10" r="10" fill="#c99a3c"/></svg><svg style="position:absolute;left:110.69999999999999px;top:1357px;" width="26" height="26" viewBox="0 0 26 26"><circle cx="13" cy="13" r="13" fill="#c99a3c"/><path d="M7.5 7.5 L18.5 18.5 M18.5 7.5 L7.5 18.5" stroke="#2b2b2b" stroke-width="3.2"/></svg><div style="position:absolute;left:147.00px;top:1357.69px;font-family:'Liberation Sans', sans-serif;font-size:26px;line-height:26px;color:#bbbbbb;white-space:pre;letter-spacing:0.58px;-webkit-text-stroke:0.25px currentColor;width:249px;overflow:hidden;">Test DFS radius search</div><svg style="position:absolute;left:147px;top:1397px;" width="26" height="26" viewBox="0 0 26 26"><circle cx="13" cy="13" r="13" fill="#c99a3c"/><path d="M7.5 7.5 L18.5 18.5 M18.5 7.5 L7.5 18.5" stroke="#1d2a33" stroke-width="3.2"/></svg><div style="position:absolute;left:182.80px;top:1397.49px;font-family:'Liberation Sans', sans-serif;font-size:26px;line-height:26px;color:#bbbbbb;white-space:pre;letter-spacing:0.58px;-webkit-text-stroke:0.25px currentColor;width:266px;overflow:hidden;">Test DFS on graph ca</div><svg style="position:absolute;left:147px;top:1437px;" width="26" height="26" viewBox="0 0 26 26"><circle cx="13" cy="13" r="13" fill="#c99a3c"/><path d="M7.5 7.5 L18.5 18.5 M18.5 7.5 L7.5 18.5" stroke="#2b2b2b" stroke-width="3.2"/></svg><div style="position:absolute;left:182.80px;top:1437.19px;font-family:'Liberation Sans', sans-serif;font-size:26px;line-height:26px;color:#bbbbbb;white-space:pre;letter-spacing:0.58px;-webkit-text-stroke:0.25px currentColor;width:203px;overflow:hidden;">Test DFS on graph</div><div style="position:absolute;left:233px;top:1277.99px;width:300px;text-align:right;font-family:'Liberation Sans', sans-serif;font-size:23px;line-height:26px;letter-spacing:0.46px;color:#8f8f8f;white-space:pre">3 sec 42 ms</div><div style="position:absolute;left:233px;top:1317.69px;width:300px;text-align:right;font-family:'Liberation Sans', sans-serif;font-size:23px;line-height:26px;letter-spacing:0.46px;color:#8f8f8f;white-space:pre">3 sec 42 ms</div><div style="position:absolute;left:233px;top:1356.99px;width:300px;text-align:right;font-family:'Liberation Sans', sans-serif;font-size:23px;line-height:26px;letter-spacing:0.46px;color:#8f8f8f;white-space:pre">3 sec 42 ms</div><div style="position:absolute;left:233px;top:1396.99px;width:300px;text-align:right;font-family:'Liberation Sans', sans-serif;font-size:23px;line-height:26px;letter-spacing:0.46px;color:#bbbbbb;white-space:pre">295 ms</div><div style="position:absolute;left:233px;top:1436.99px;width:300px;text-align:right;font-family:'Liberation Sans', sans-serif;font-size:23px;line-height:26px;letter-spacing:0.46px;color:#8f8f8f;white-space:pre">2 sec 747 ms</div><div style="position:absolute;left:542px;top:1269px;width:2281px;height:251px;background:#2b2b2b;"></div><div style="position:absolute;left:542px;top:1269px;width:3px;height:251px;background:#2f2f2f;"></div><div style="position:absolute;left:100px;top:1268px;width:2780px;height:2px;background:#323232;"></div><div style="position:absolute;left:569.50px;top:1324.05px;font-family:'Liberation Mono', monospace;font-size:26.03px;line-height:26.03px;color:#ff6b68;white-space:pre;-webkit-text-stroke:0.4px currentColor;width:2253.5px;overflow:hidden;height:196.0px;">java.lang.AssertionError:</div><div style="position:absolute;left:569.50px;top:1368.05px;font-family:'Liberation Mono', monospace;font-size:26.03px;line-height:26.03px;color:#ff6b68;white-space:pre;-webkit-text-stroke:0.4px currentColor;width:2253.5px;overflow:hidden;height:152.0px;">Expected: iterable with items [<7876262014L>, <340726982L>, <340726980L>, <340726979L>, <340726978L>, <7215860608L>, <7215860609L>, <7215860610L>, <7215860611L>]</div><div style="position:absolute;left:647.60px;top:1412.05px;font-family:'Liberation Mono', monospace;font-size:26.03px;line-height:26.03px;color:#ff6b68;white-space:pre;-webkit-text-stroke:0.4px currentColor;width:2175.4px;overflow:hidden;height:108.0px;">but: no item matches: <7876262014L>, <340726982L>, <340726980L>, <340726979L>, <340726978L>, <7215860608L>, <7215860609L>, <7215860610L>, <7215860611L></div><div style="position:absolute;left:631.98px;top:1500.05px;font-family:'Liberation Mono', monospace;font-size:26.03px;line-height:26.03px;color:#ff6b68;white-space:pre;-webkit-text-stroke:0.4px currentColor;width:2191.0px;overflow:hidden;height:20.0px;">at org.hamcrest.MatcherAssert.assertThat(<span style="color:#8c8c8c">MatcherAssert.java:20</span>)</div><div style="position:absolute;left:2823px;top:1269px;width:57px;height:251px;background:#3c3f41;"></div><svg style="position:absolute;left:2840px;top:1284px;" width="24" height="28" viewBox="0 0 24 28"><path d="M12 4 V26" stroke="#afb1b3" stroke-width="3"/><path d="M4 12 L12 4 L20 12" fill="none" stroke="#afb1b3" stroke-width="3"/></svg><svg style="position:absolute;left:2840px;top:1336px;" width="24" height="28" viewBox="0 0 24 28"><path d="M12 2 V24" stroke="#afb1b3" stroke-width="3"/><path d="M4 16 L12 24 L20 16" fill="none" stroke="#afb1b3" stroke-width="3"/></svg><svg style="position:absolute;left:2838px;top:1388px;" width="28" height="30" viewBox="0 0 28 30"><rect x="2" y="2" width="22" height="3" fill="#afb1b3"/><path d="M2 11 H18 A5 5 0 0 1 18 21 H11" fill="none" stroke="#afb1b3" stroke-width="3"/><path d="M9 16 L14 21 L9 26" fill="none" stroke="#afb1b3" stroke-width="2.5"/><rect x="2" y="19" width="5" height="3" fill="#afb1b3"/></svg><svg style="position:absolute;left:2838px;top:1438px;" width="28" height="28" viewBox="0 0 28 28"><rect x="2" y="4" width="8" height="3" fill="#afb1b3"/><rect x="2" y="13" width="5" height="3" fill="#afb1b3"/><rect x="2" y="22" width="24" height="3" fill="#afb1b3"/><path d="M18 2 V16" stroke="#afb1b3" stroke-width="3"/><path d="M12 11 L18 17 L24 11" fill="none" stroke="#afb1b3" stroke-width="2.5"/></svg><svg style="position:absolute;left:2844px;top:1494px;" width="18" height="14" viewBox="0 0 18 14"><path d="M2 2 L7 7 L2 12 M10 2 L15 7 L10 12" fill="none" stroke="#afb1b3" stroke-width="1.8"/></svg><div style="position:absolute;left:0px;top:1520px;width:2880px;height:42px;background:#3c3f41;"></div><div style="position:absolute;left:0px;top:1520px;width:2880px;height:2px;background:#323232;"></div><div style="position:absolute;left:140px;top:1522px;width:110px;height:40px;background:#2d2f31;"></div><svg style="position:absolute;left:60px;top:1530px;" width="22" height="26" viewBox="0 0 22 26"><circle cx="5" cy="5" r="3.2" fill="#afb1b3"/><circle cx="5" cy="22" r="3.2" fill="#afb1b3"/><circle cx="17" cy="7" r="3.2" fill="#afb1b3"/><path d="M5 5 V22 M17 7 Q17 15 6 18" fill="none" stroke="#afb1b3" stroke-width="2.5"/></svg><div style="position:absolute;left:92.80px;top:1531.38px;font-family:'Liberation Sans', sans-serif;font-size:22px;line-height:22px;color:#bbbbbb;white-space:pre;-webkit-text-stroke:0.25px currentColor;">Git</div><svg style="position:absolute;left:162px;top:1531px;" width="20" height="24" viewBox="0 0 20 24"><path d="M2 2 L18 12 L2 22 Z" fill="#afb1b3"/></svg><div style="position:absolute;left:194.70px;top:1531.38px;font-family:'Liberation Sans', sans-serif;font-size:22px;line-height:22px;color:#ffffff;white-space:pre;-webkit-text-stroke:0.25px currentColor;">Run</div><svg style="position:absolute;left:272px;top:1532px;" width="24" height="22" viewBox="0 0 24 22"><rect x="2" y="2" width="3" height="3" fill="#afb1b3"/><rect x="8" y="2" width="14" height="3" fill="#afb1b3"/><rect x="2" y="9" width="3" height="3" fill="#afb1b3"/><rect x="8" y="9" width="14" height="3" fill="#afb1b3"/><rect x="2" y="16" width="3" height="3" fill="#afb1b3"/><rect x="8" y="16" width="14" height="3" fill="#afb1b3"/></svg><div style="position:absolute;left:304.70px;top:1531.38px;font-family:'Liberation Sans', sans-serif;font-size:22px;line-height:22px;color:#bbbbbb;white-space:pre;letter-spacing:-0.88px;-webkit-text-stroke:0.25px currentColor;">TODO</div><svg style="position:absolute;left:408px;top:1530px;" width="23" height="23" viewBox="0 0 23 23"><circle cx="11.5" cy="11.5" r="10.5" fill="#afb1b3"/><rect x="10" y="5" width="3.5" height="8" fill="#3c3f41"/><rect x="10" y="15" width="3.5" height="3.5" fill="#3c3f41"/></svg><div style="position:absolute;left:440.60px;top:1531.38px;font-family:'Liberation Sans', sans-serif;font-size:22px;line-height:22px;color:#bbbbbb;white-space:pre;letter-spacing:0.27px;-webkit-text-stroke:0.25px currentColor;">Problems</div><svg style="position:absolute;left:579px;top:1531px;" width="24" height="22" viewBox="0 0 24 22"><rect x="1" y="1" width="22" height="20" fill="#afb1b3"/><path d="M4 5 L9 9 L4 13" fill="none" stroke="#3c3f41" stroke-width="1.8"/><rect x="11" y="14" width="7" height="2" fill="#3c3f41"/></svg><div style="position:absolute;left:612.80px;top:1531.38px;font-family:'Liberation Sans', sans-serif;font-size:22px;line-height:22px;color:#bbbbbb;white-space:pre;letter-spacing:0.21px;-webkit-text-stroke:0.25px currentColor;">Terminal</div><svg style="position:absolute;left:736px;top:1529px;" width="30" height="28" viewBox="0 0 30 28"><path d="M2 9 L10 2 L15 6 L13 8 L27 22 L23 26 L9 12 L6 15 Z" fill="#afb1b3"/></svg><div style="position:absolute;left:772.90px;top:1531.38px;font-family:'Liberation Sans', sans-serif;font-size:22px;line-height:22px;color:#bbbbbb;white-space:pre;letter-spacing:0.48px;-webkit-text-stroke:0.25px currentColor;">Build</div><svg style="position:absolute;left:2683px;top:1529px;" width="28" height="28" viewBox="0 0 28 28"><path d="M14 1 A13 13 0 1 0 14 27 H27 V14 A13 13 0 0 0 14 1 Z" fill="#499c54"/><text x="2.5" y="20.5" font-family="Liberation Sans" font-weight="700" font-size="16" letter-spacing="-1" fill="#ffffff">9+</text></svg><div style="position:absolute;left:2718.50px;top:1531.38px;font-family:'Liberation Sans', sans-serif;font-size:22px;line-height:22px;color:#bbbbbb;white-space:pre;letter-spacing:0.3px;-webkit-text-stroke:0.25px currentColor;">Event Log</div><div style="position:absolute;left:0px;top:1561px;width:2880px;height:2px;background:#47494b;"></div><div style="position:absolute;left:0px;top:1563px;width:2880px;height:41px;background:#3c3f41;"></div><svg style="position:absolute;left:10px;top:1570px;" width="28" height="28" viewBox="0 0 28 28"><rect x="7" y="2" width="18" height="18" fill="none" stroke="#afb1b3" stroke-width="2"/><path d="M3 7 V25 H20" fill="none" stroke="#afb1b3" stroke-width="2"/></svg><div style="position:absolute;left:63.00px;top:1573.38px;font-family:'Liberation Sans', sans-serif;font-size:22px;line-height:22px;color:#bbbbbb;white-space:pre;letter-spacing:0.28px;-webkit-text-stroke:0.25px currentColor;">Tests failed: 2, passed: 0 (a minute ago)</div><div style="position:absolute;left:2360.40px;top:1573.98px;font-family:'Liberation Sans', sans-serif;font-size:22px;line-height:22px;color:#bbbbbb;white-space:pre;-webkit-text-stroke:0.25px currentColor;">140:31</div><div style="position:absolute;left:2452.50px;top:1573.98px;font-family:'Liberation Sans', sans-serif;font-size:22px;line-height:22px;color:#bbbbbb;white-space:pre;letter-spacing:-0.7px;-webkit-text-stroke:0.25px currentColor;">LF</div><div style="position:absolute;left:2500.90px;top:1573.98px;font-family:'Liberation Sans', sans-serif;font-size:22px;line-height:22px;color:#bbbbbb;white-space:pre;letter-spacing:0.75px;-webkit-text-stroke:0.25px currentColor;">UTF-8</div><div style="position:absolute;left:2590.80px;top:1573.98px;font-family:'Liberation Sans', sans-serif;font-size:22px;line-height:22px;color:#bbbbbb;white-space:pre;letter-spacing:0.35px;-webkit-text-stroke:0.25px currentColor;">4 spaces</div><svg style="position:absolute;left:2706px;top:1569px;" width="26" height="32" viewBox="0 0 26 32"><circle cx="6" cy="26" r="3.2" fill="#afb1b3"/><circle cx="6" cy="5" r="3.2" fill="#afb1b3"/><circle cx="20" cy="8" r="3.2" fill="#afb1b3"/><path d="M6 5 V26 M20 8 Q20 17 7 20" fill="none" stroke="#afb1b3" stroke-width="2.5"/></svg><div style="position:absolute;left:2740.00px;top:1573.98px;font-family:'Liberation Sans', sans-serif;font-size:22px;line-height:22px;color:#bbbbbb;white-space:pre;letter-spacing:0.68px;-webkit-text-stroke:0.25px currentColor;">master</div><svg style="position:absolute;left:2828px;top:1570px;" width="28" height="26" viewBox="0 0 28 26"><path d="M4 12 V7 A6 6 0 0 1 16 7" fill="none" stroke="#afb1b3" stroke-width="2.5"/><rect x="10" y="12" width="14" height="12" fill="#afb1b3"/></svg></div><div id="frame"></div>
</body></html>
